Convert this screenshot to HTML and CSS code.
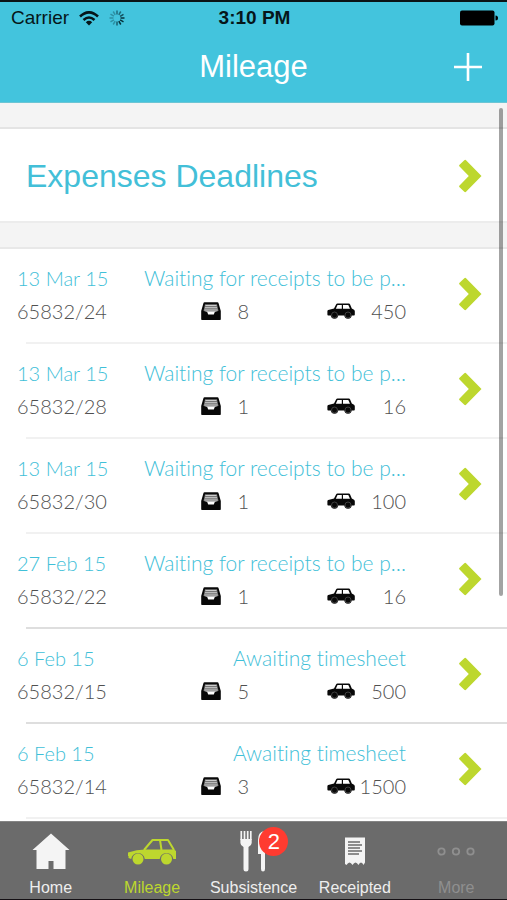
FILE: index.html
```html
<!DOCTYPE html>
<html lang="en">
<head>
<meta charset="utf-8">
<meta name="viewport" content="width=device-width, initial-scale=1">
<title>Mileage</title>
<link rel="stylesheet" href="styles.css">
</head>
<body>
<svg class="defs" aria-hidden="true">
  <symbol id="chevron" viewBox="0 0 24 34">
    <path d="M1.300 6 6.300 1.200Q7.300.4 8.300 1.400L23.500 17 8.300 32.600Q7.300 33.600 6.300 32.800L1.300 28Q.8 27.400 1.300 26.800L10.800 17 1.300 7.200Q.8 6.600 1.300 6Z" fill="#bdd72e"/>
  </symbol>
  <symbol id="tray" viewBox="0 0 20 18">
    <path d="M3.500.3h13Q17.300.3 17.500 1L19.800 9v8.300q0 .7-.7.700H.9Q.2 18 .2 17.300V9L2.500 1Q2.700.3 3.500.3Z" fill="#080808"/>
    <path d="M4 2.300h12L17.500 9H2.500Z" fill="#777"/>
    <path d="M4.500 3.500h11M4 5.700h12M3.500 8h13" stroke="#ccc" stroke-width="1"/>
    <path d="M3 9.200h14l-3.200.8-1 2.500H7.200l-1-2.500Z" fill="#fff"/>
  </symbol>
  <symbol id="car" viewBox="0 0 28 16">
    <path d="M7 5.500 9.200 1.300Q9.600.5 10.500.5h11.300q.9 0 1.200.8L24.800 5.500l2.200 1.200q.8.500.8 1.500v3.300q0 1-.8 1H1.200q-.8 0-.8-1V8q0-.8.800-1.100Z" fill="#080808"/>
    <path d="M8.800 5.800 10.500 2h4.300v3.800Zm7.200 0V2h5.300l1.700 3.800Z" fill="#fff"/>
    <circle cx="7.500" cy="12" r="3.700" fill="#080808"/><circle cx="21" cy="12" r="3.700" fill="#080808"/>
    <circle cx="7.500" cy="12" r="3" fill="none" stroke="#777" stroke-width=".5"/><circle cx="21" cy="12" r="3" fill="none" stroke="#777" stroke-width=".5"/>
  </symbol>
</svg>

<header class="top">
  <div class="status">
    <div class="status-left">
      <span>Carrier</span>
      <svg width="20" height="15" viewBox="0 0 20 15" fill="none" stroke="#06161a" stroke-width="2.600"><path d="M1 5.500Q10-2.800 19 5.500M4.500 9Q10 4 15.500 9"/><path d="M6.800 11.200Q10 8.500 13.200 11.200L10 14.500Z" fill="#06161a" stroke="none"/></svg>
      <svg class="spinner" width="16" height="16" viewBox="0 0 16 16" stroke="#06323c" stroke-width="1.500"><path d="M8 .5v4" opacity=".6"/><path d="m11.800 1.500-2 3.400" opacity=".6"/><path d="m14.500 4.300-3.400 2" opacity=".8"/><path d="M11.500 8h4"/><path d="m11.100 9.800 3.400 2"/><path d="m9.800 11.100 2 3.400"/><path d="M8 11.500v4" opacity=".7"/><path d="m6.200 11.100-2 3.400M4.900 9.800l-3.400 2M4.500 8h-4M4.900 6.200l-3.400-2M6.200 4.900l-2-3.400" opacity=".35"/></svg>
    </div>
    <span class="clock">3:10 PM</span>
    <svg class="battery" width="38" height="16" viewBox="0 0 38 16"><rect width="34.500" height="15" y=".5" rx="2"/><path d="M35.500 5.500q2.500 0 2.500 2.500t-2.500 2.500Z"/></svg>
  </div>
  <div class="nav">
    <h1>Mileage</h1>
    <button class="add" type="button" aria-label="Add"><svg width="28" height="28" viewBox="0 0 28 28" stroke="#fff" stroke-width="2.600"><path d="M0 14h28M14 0v28"/></svg></button>
  </div>
</header>

<main>
  <div class="scrollbar"></div>
  <a class="deadlines" href="#"><span>Expenses Deadlines</span><svg class="chevron"><use href="#chevron"/></svg></a>
  <ul class="claims">
    <li><a class="claim" href="#"><span class="date">13 Mar 15</span><span class="state">Waiting for receipts to be p…</span><span class="ref">65832/24</span><svg class="tray"><use href="#tray"/></svg><span class="count">8</span><svg class="car"><use href="#car"/></svg><span class="miles">450</span><svg class="chevron"><use href="#chevron"/></svg></a></li>
    <li><a class="claim" href="#"><span class="date">13 Mar 15</span><span class="state">Waiting for receipts to be p…</span><span class="ref">65832/28</span><svg class="tray"><use href="#tray"/></svg><span class="count">1</span><svg class="car"><use href="#car"/></svg><span class="miles">16</span><svg class="chevron"><use href="#chevron"/></svg></a></li>
    <li><a class="claim" href="#"><span class="date">13 Mar 15</span><span class="state">Waiting for receipts to be p…</span><span class="ref">65832/30</span><svg class="tray"><use href="#tray"/></svg><span class="count">1</span><svg class="car"><use href="#car"/></svg><span class="miles">100</span><svg class="chevron"><use href="#chevron"/></svg></a></li>
    <li class="strong"><a class="claim" href="#"><span class="date">27 Feb 15</span><span class="state">Waiting for receipts to be p…</span><span class="ref">65832/22</span><svg class="tray"><use href="#tray"/></svg><span class="count">1</span><svg class="car"><use href="#car"/></svg><span class="miles">16</span><svg class="chevron"><use href="#chevron"/></svg></a></li>
    <li class="strong"><a class="claim" href="#"><span class="date">6 Feb 15</span><span class="state">Awaiting timesheet</span><span class="ref">65832/15</span><svg class="tray"><use href="#tray"/></svg><span class="count">5</span><svg class="car"><use href="#car"/></svg><span class="miles">500</span><svg class="chevron"><use href="#chevron"/></svg></a></li>
    <li><a class="claim" href="#"><span class="date">6 Feb 15</span><span class="state">Awaiting timesheet</span><span class="ref">65832/14</span><svg class="tray"><use href="#tray"/></svg><span class="count">3</span><svg class="car"><use href="#car"/></svg><span class="miles">1500</span><svg class="chevron"><use href="#chevron"/></svg></a></li>
  </ul>
</main>

<nav class="tabs">
  <a href="#"><span class="icon"><svg width="38" height="42" viewBox="0 0 38 42"><path d="M19 3.500 37.500 20H33.500v19H21.500v-8h-5v8H4.500V20H.5Z" fill="#f4f4f4"/></svg></span><span>Home</span></a>
  <a class="active" href="#" aria-current="page"><span class="icon"><svg width="50" height="42" viewBox="0 0 50 42"><path d="M17 20 25.500 10H41l6 10" fill="none" stroke="#bdd72e" stroke-width="2" stroke-linejoin="round"/><path d="M33 10 34.500 20" stroke="#bdd72e" stroke-width="2"/><path d="M1 22.500Q10 19.500 18 19.500H47L49 21V29H46.300a6.900 6.900 0 0 0-13.600 0H17.800a6.900 6.900 0 0 0-13.600 0L1.500 28V26H1Z" fill="#bdd72e"/><circle cx="11" cy="29" r="5.500" fill="#bdd72e"/><circle cx="39.500" cy="29" r="5.500" fill="#bdd72e"/></svg></span><span>Mileage</span></a>
  <a href="#"><span class="icon"><svg width="30" height="42" viewBox="0 0 30 42" fill="#f4f4f4"><path d="M3.300 1v9M6.500 1v9M9.700 1v9M12.800 1v9" stroke="#f4f4f4" stroke-width="1.700"/><path d="M2.400 9h11.300v4q0 2.500-3.200 4V39q0 2.500-2.500 2.500T5.500 39V17Q2.400 15.500 2.400 13ZM26 1q-6 1-6 9v14h3V39q0 2.500 2 2.500t2-2.500V1Z"/></svg><span class="badge">2</span></span><span>Subsistence</span></a>
  <a href="#"><span class="icon"><svg width="22" height="42" viewBox="0 0 22 42"><path d="M1 7.500h20v25l-1.500 2.500q-1-2.500-2.500-2.500T14.500 35Q13 32.500 11.500 32.500T8.500 35Q7 32.500 5.500 32.500T2.500 35L1 34Z" fill="#f4f4f4"/><path d="M4 12h12M4 15h14M4 18h12M4 21h14M4 24h11" stroke="#6b6b6b" stroke-width="1.600"/></svg></span><span>Receipted</span></a>
  <a class="dim" href="#"><span class="icon"><svg width="38" height="42" viewBox="0 0 38 42" fill="none" stroke="#8f8f8f" stroke-width="1.800"><circle cx="4.500" cy="21.500" r="3.200"/><circle cx="19" cy="21.500" r="3.200"/><circle cx="33.500" cy="21.500" r="3.200"/></svg></span><span>More</span></a>
</nav>
</body>
</html>
```
FILE: styles.css
```css
* { box-sizing: border-box; }

body {
  margin: 0;
  min-height: 100vh;
  display: flex;
  flex-direction: column;
  background: #fff;
  font-family: "Liberation Sans", Arial, sans-serif;
}

a { color: inherit; text-decoration: none; }
svg { display: block; flex: none; }
.defs { position: absolute; width: 0; height: 0; }

.top {
  background: #43c4dd;
  border-top: 2px solid #0b1416;
  border-bottom: 1px solid #6cc5d4;
}

.status {
  display: grid;
  grid-template-columns: 1fr auto 1fr;
  align-items: center;
  height: 32px;
  padding: 0 9px 0 11px;
  font-size: 19px;
  color: #06161a;
}
.status-left { display: flex; align-items: center; gap: 10px; }
.clock { font-weight: bold; }
.battery { justify-self: end; }

.nav {
  display: grid;
  grid-template-columns: 1fr auto 1fr;
  align-items: center;
  height: 68px;
  padding: 0 25px 3px;
}
.nav h1 {
  grid-column: 2;
  margin: 0;
  font-size: 31px;
  font-weight: normal;
  color: #fff;
}
.add {
  justify-self: end;
  padding: 0;
  border: 0;
  background: none;
}

main {
  position: relative;
  flex: 1;
  background: #fff;
  border-top: 24px solid #f4f4f4;
}

.scrollbar {
  position: absolute;
  top: -19px;
  right: 4px;
  width: 4px;
  height: 488px;
  border-radius: 2px;
  background: rgba(0, 0, 0, 0.36);
}

.chevron { width: 24px; height: 34px; }

.deadlines {
  display: flex;
  align-items: center;
  justify-content: space-between;
  height: 96px;
  padding: 2px 25px 0 26px;
  border-top: 2px solid #e4e4e4;
  border-bottom: 2px solid #ececec;
  font-size: 32px;
  color: #43bfd8;
}

.claims {
  margin: 0;
  padding: 0;
  list-style: none;
  border-top: 24px solid #f4f4f4;
}
.claims::before {
  content: "";
  display: block;
  height: 2px;
  background: #e8e8e8;
}
.claims li::after {
  content: "";
  display: block;
  height: 2px;
  margin-left: 26px;
  background: #f1f1f1;
}
.claims .strong::after { background: #dedede; }

.claim {
  display: grid;
  grid-template-columns: 124px 80px 28px auto 1fr auto 76px;
  grid-template-rows: 33px 33px;
  align-items: center;
  height: 93px;
  padding: 12px 25px 14px 17px;
  font-family: Lato, "Open Sans", sans-serif;
  font-size: 20px;
  font-weight: 300;
  font-variant-ligatures: none;
  color: #505050;
}
.date, .state { color: #3fc0d8; white-space: nowrap; }
.date { grid-column: 1; }
.state { grid-column: 2 / 7; grid-row: 1; justify-self: end; font-size: 21px; }
.ref { grid-column: 1; }
.tray { grid-column: 2; justify-self: end; width: 20px; height: 18px; }
.count { grid-column: 3; justify-self: end; }
.car { grid-column: 5; justify-self: end; width: 28px; height: 16px; }
.miles { grid-column: 6; min-width: 51px; text-align: right; }
.claim .chevron { grid-column: 7; grid-row: 1 / 3; justify-self: end; }

.tabs {
  display: grid;
  grid-template-columns: repeat(5, 1fr);
  height: 79px;
  padding-top: 8px;
  background: #6b6b6b;
  border-top: 1px solid #858585;
  border-bottom: 1px solid #141014;
  font-size: 16px;
  line-height: 18px;
  color: #eee;
}
.tabs a { display: flex; flex-direction: column; align-items: center; gap: 7px; }
.icon { position: relative; }
.tabs .active { color: #bdd72e; }
.tabs .dim { color: #8f8f8f; }
.badge {
  position: absolute;
  top: -3px;
  left: 21px;
  width: 29px;
  height: 29px;
  border-radius: 50%;
  background: #ff3b30;
  color: #fff;
  font-size: 22px;
  line-height: 29px;
  text-align: center;
}
```
